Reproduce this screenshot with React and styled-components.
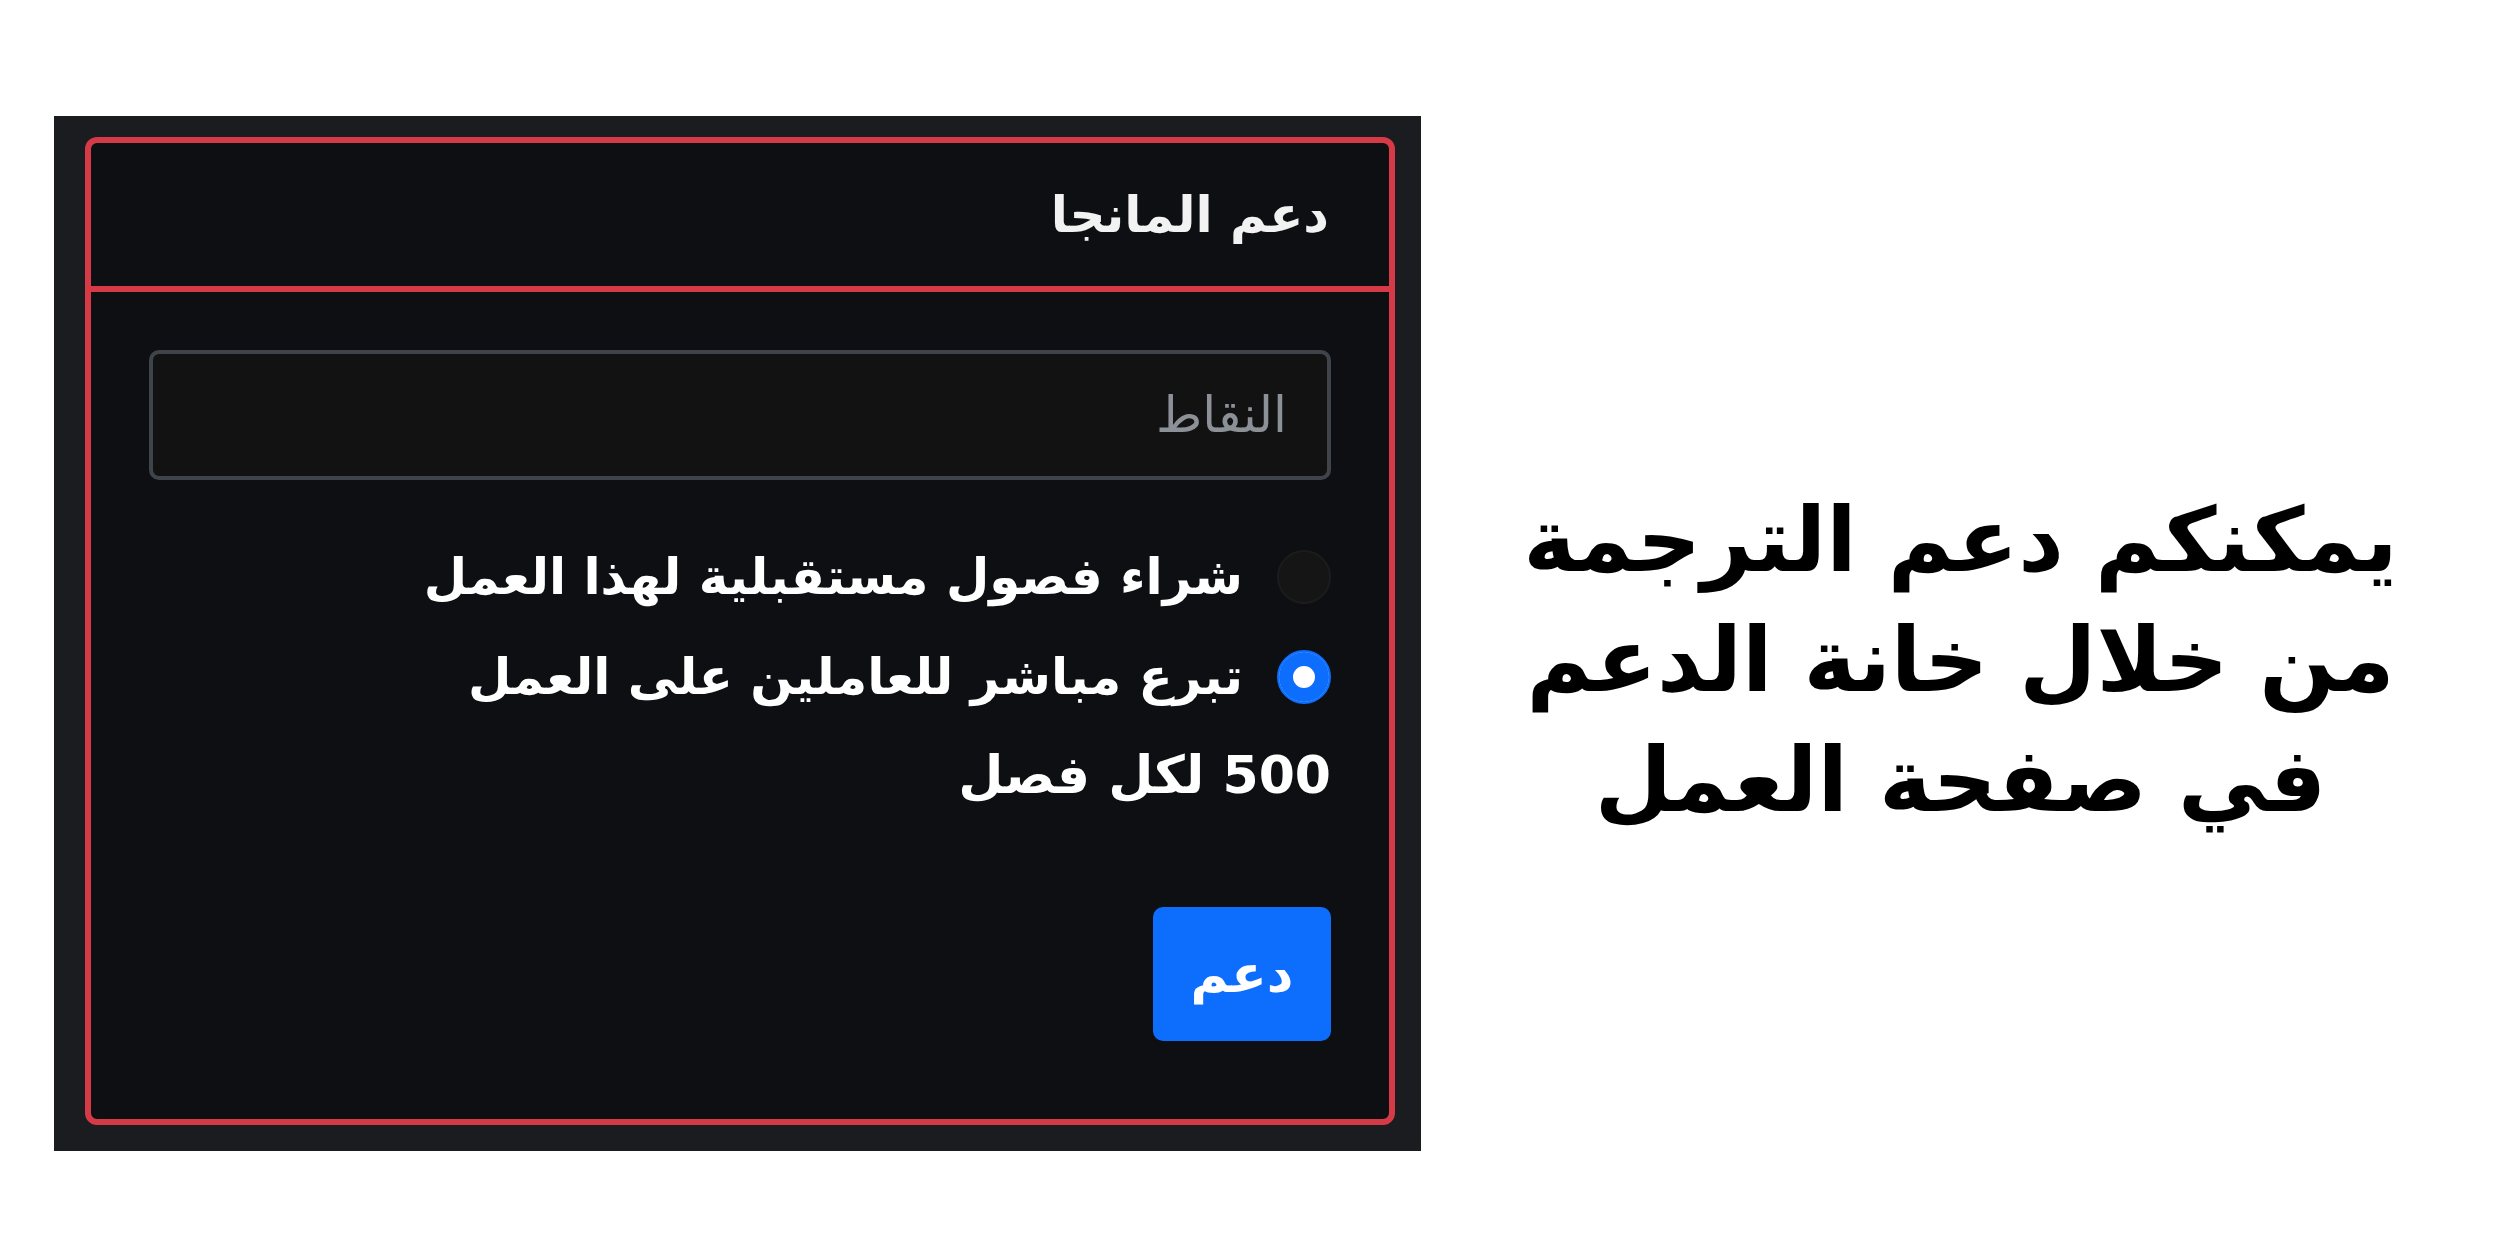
import styled, { createGlobalStyle } from 'styled-components';

const GlobalStyle = createGlobalStyle`
  html, body {
    margin: 0;
    padding: 0;
    background: #ffffff;
  }
  body {
    font-family: "DejaVu Sans", sans-serif;
  }
`;

const Page = styled.div`
  width: 2500px;
  height: 1248px;
  display: flex;
  align-items: center;
  padding: 19px 0 0 54px;
  box-sizing: border-box;
`;

const Panel = styled.div`
  width: 1367px;
  height: 1035px;
  flex: none;
  background: #1b1c1f;
  padding: 21px 26px 26px 31px;
  box-sizing: border-box;
  display: flex;
`;

const Card = styled.div`
  flex: 1;
  display: flex;
  flex-direction: column;
  background: #0d0f12;
  border: 6px solid #d73a47;
  border-radius: 12px;
`;

const CardHeader = styled.div`
  height: 143px;
  display: flex;
  align-items: center;
  padding: 0 60px;
  border-bottom: 6px solid #d73a47;
  color: #f2f2f2;
  font-size: 50px;
  font-weight: 700;
  line-height: 1;
`;

const CardBody = styled.div`
  flex: 1;
  display: flex;
  flex-direction: column;
  padding: 58px 58px 0;
`;

const PointsInput = styled.input`
  height: 130px;
  box-sizing: border-box;
  background: #121212;
  border: 4px solid #3f444a;
  border-radius: 10px;
  padding: 0 40px;
  color: #e6e6e6;
  font-family: "DejaVu Sans", sans-serif;
  font-size: 50px;
  outline: none;

  &::placeholder {
    color: #8c9197;
  }
`;

const Options = styled.div`
  display: flex;
  flex-direction: column;
  gap: 28px;
  margin-top: 61px;
`;

const Option = styled.label`
  height: 72px;
  display: flex;
  align-items: center;
  gap: 34px;
  color: #ffffff;
  font-size: 50px;
  font-weight: 700;
  line-height: 1;
`;

const Radio = styled.input.attrs({ type: 'radio' })`
  appearance: none;
  margin: 0;
  width: 54px;
  height: 54px;
  flex: none;
  border-radius: 50%;
  background: #151515;
  border: 2px solid #1c1c1c;
  box-sizing: border-box;

  &:checked {
    background: #0d6efd;
    border-color: #0d6efd;
    box-shadow: inset 0 0 0 14px #0d6efd, inset 0 0 0 30px #ffffff;
  }
`;

const Price = styled.div`
  height: 72px;
  margin-top: 26px;
  display: flex;
  align-items: center;
  color: #ffffff;
  font-size: 52px;
  font-weight: 700;
  line-height: 1;
`;

const SupportButton = styled.button`
  align-self: flex-start;
  margin-top: 96px;
  width: 178px;
  height: 134px;
  border: none;
  border-radius: 10px;
  background: #0d6efd;
  color: #ffffff;
  font-family: "DejaVu Sans", sans-serif;
  font-size: 52px;
  font-weight: 700;
`;

const Notice = styled.div`
  flex: 1;
  display: flex;
  flex-direction: column;
  align-items: center;
  padding-top: 52px;
  color: #000000;
  font-size: 89px;
  font-weight: 700;
  line-height: 120px;
`;

function App() {
  return (
    <>
      <GlobalStyle />
      <Page>
        <Panel>
          <Card dir="rtl">
            <CardHeader>دعم المانجا</CardHeader>
            <CardBody>
              <PointsInput placeholder="النقاط" />
              <Options>
                <Option>
                  <Radio name="kind" />
                  شراء فصول مستقبلية لهذا العمل
                </Option>
                <Option>
                  <Radio name="kind" defaultChecked />
                  تبرع مباشر للعاملين على العمل
                </Option>
              </Options>
              <Price>500 لكل فصل</Price>
              <SupportButton>دعم</SupportButton>
            </CardBody>
          </Card>
        </Panel>
        <Notice dir="rtl">
          <span>يمكنكم دعم الترجمة</span>
          <span>من خلال خانة الدعم</span>
          <span>في صفحة العمل</span>
        </Notice>
      </Page>
    </>
  );
}

export default App;
